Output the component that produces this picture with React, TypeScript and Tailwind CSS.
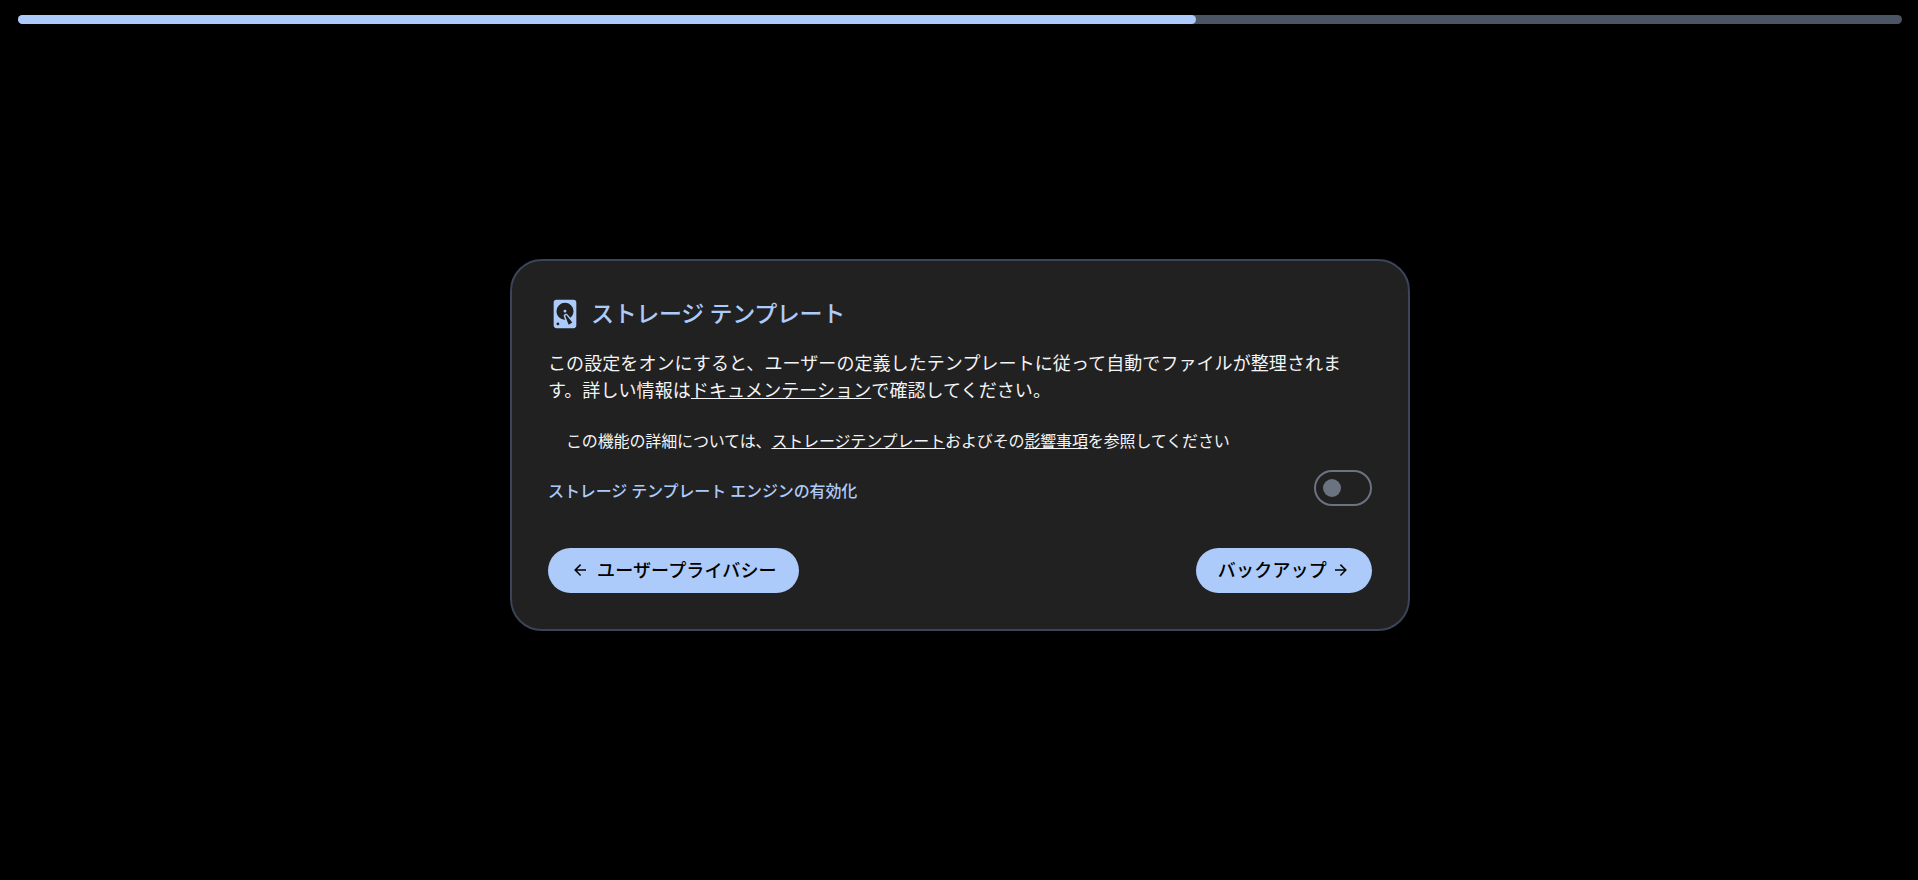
import React from "react";

const jp = "font-['Inter','Noto_Sans_CJK_JP',sans-serif]";

function DiskIcon() {
  return (
    <svg viewBox="0 0 24 24" width="34" height="34" fill="currentColor" className="text-[#adcbfa]">
      <path d="M6,2H18A2,2 0 0,1 20,4V20A2,2 0 0,1 18,22H6A2,2 0 0,1 4,20V4A2,2 0 0,1 6,2M12,4A6,6 0 0,0 6,10C6,13.31 8.69,16 12.1,16L11.22,13.77C10.95,13.29 11.11,12.68 11.59,12.4L12.45,11.9C12.93,11.63 13.54,11.79 13.82,12.27L15.74,14.69C17.12,13.59 18,11.9 18,10A6,6 0 0,0 12,4M12,9A1,1 0 0,1 13,10A1,1 0 0,1 12,11A1,1 0 0,1 11,10A1,1 0 0,1 12,9M7,18A1,1 0 0,0 6,19A1,1 0 0,0 7,20A1,1 0 0,0 8,19A1,1 0 0,0 7,18M12.09,13.27L14.58,19.58L17.17,18.08L12.95,12.77L12.09,13.27Z" />
    </svg>
  );
}

function ArrowLeft() {
  return (
    <svg viewBox="0 0 24 24" width="18" height="18" fill="currentColor">
      <path d="M20,11V13H8L13.5,18.5L12.08,19.92L4.16,12L12.08,4.08L13.5,5.5L8,11H20Z" />
    </svg>
  );
}

function ArrowRight() {
  return (
    <svg viewBox="0 0 24 24" width="18" height="18" fill="currentColor">
      <path d="M4,11V13H16L10.5,18.5L11.92,19.92L19.84,12L11.92,4.08L10.5,5.5L16,11H4Z" />
    </svg>
  );
}

export default function App() {
  return (
    <div className={`flex h-[880px] flex-col bg-black ${jp}`}>
      <div className="pl-[18px] pr-4 pt-[15px]">
        <div className="h-[9px] w-full rounded-full bg-[#4b5563]">
          <div className="h-full w-[62.5%] rounded-full bg-[#adcbfa]" />
        </div>
      </div>
      <div className="flex flex-1 items-center justify-center pl-[2px]">
        <div className="mt-[-15px] w-[900px] rounded-[32px] border-2 border-[#3a4559] bg-[#212121] p-9">
          <div className="flex items-center gap-[9px]">
            <DiskIcon />
            <h1 className="text-[23px] font-medium leading-8 tracking-[-0.35px] text-[#adcbfa]">ストレージ テンプレート</h1>
          </div>
          <p className="mt-[19px] text-[18px] leading-[27px] tracking-[0.08px] text-[#f3f4f6]">
            この設定をオンにすると、ユーザーの定義したテンプレートに従って自動でファイルが整理されます。詳しい情報は
            <span className="underline">ドキュメンテーション</span>で確認してください。
          </p>
          <p className="mt-[25px] pl-[18px] text-[16px] leading-6 tracking-[-0.14px] text-[#f3f4f6]">
            この機能の詳細については、<span className="underline">ストレージテンプレート</span>およびその
            <span className="underline">影響事項</span>を参照してください
          </p>
          <div className="mt-[17px] flex items-center justify-between">
            <span className="pt-[6px] text-[16px] font-medium tracking-[-0.12px] text-[#adcbfa]">ストレージ テンプレート エンジンの有効化</span>
            <div className="flex h-9 w-[58px] items-center rounded-full border-2 border-[#6b7280] pl-[7px]">
              <div className="h-[18px] w-[18px] rounded-full bg-[#6b7280]" />
            </div>
          </div>
          <div className="mt-[42px] flex justify-between">
            <button className="flex h-[45px] items-center gap-2 rounded-full bg-[#adcbfa] pl-[23px] pr-[22px] text-[18px] font-medium tracking-[0.15px] text-black">
              <ArrowLeft />
              ユーザープライバシー
            </button>
            <button className="flex h-[45px] items-center gap-[5px] rounded-full bg-[#adcbfa] pl-[22px] pr-[22px] text-[18px] font-medium tracking-[0.2px] text-black">
              バックアップ
              <ArrowRight />
            </button>
          </div>
        </div>
      </div>
    </div>
  );
}
